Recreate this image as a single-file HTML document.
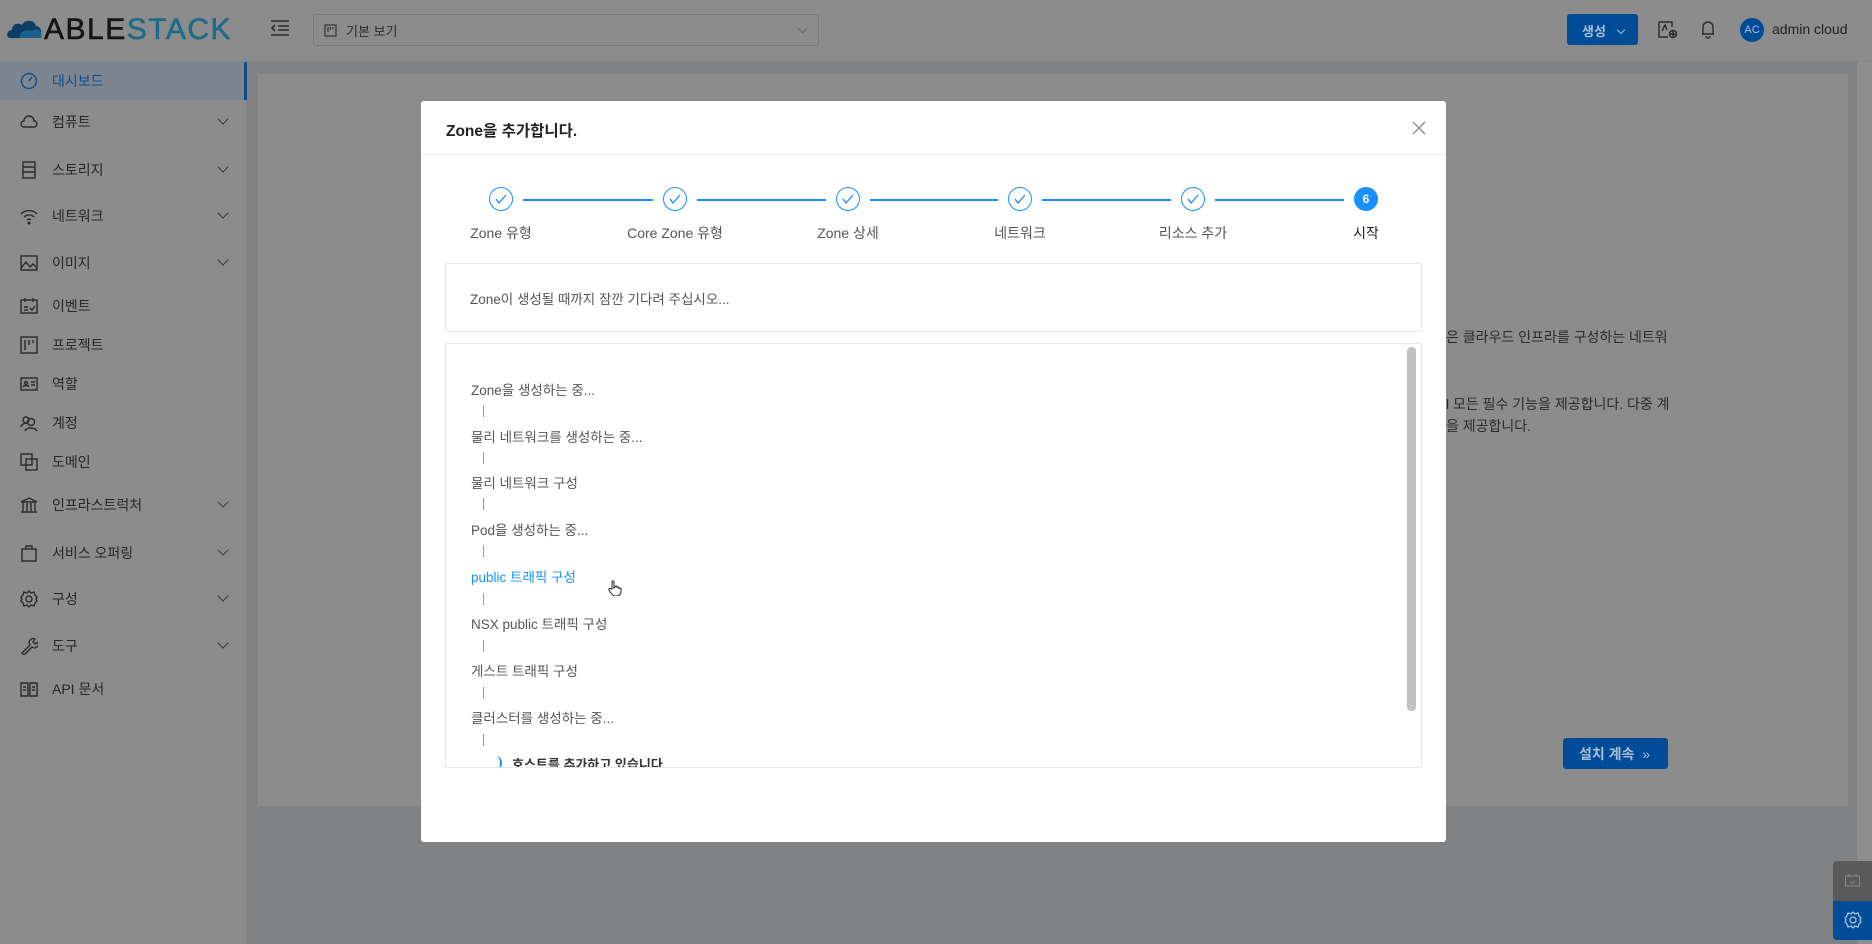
<!DOCTYPE html>
<html><head><meta charset="utf-8">
<style>
*{box-sizing:border-box;margin:0;padding:0}
body{width:1872px;height:944px;overflow:hidden;background:#7f8182;font-family:"Liberation Sans","Noto Sans CJK KR",sans-serif;font-size:14px;color:#2a2a2a;position:relative}
.hdr{position:absolute;left:0;top:0;width:1872px;height:62px;background:#8c8c8c;border-bottom:1px solid #858585}
.side{position:absolute;left:0;top:62px;width:247px;height:882px;background:#8c8c8c;border-right:1px solid #848484}
.mi{position:absolute;left:0;width:247px;height:40px;display:flex;align-items:center;padding-left:20px;font-size:14px;color:#262626}
.mi svg{width:18px;height:18px;margin-right:14px;stroke:#2a2a2a;fill:none;stroke-width:1.4}
.mi .ch{position:absolute;right:20px;top:13px;width:8px;height:8px;border-right:1.6px solid #333;border-bottom:1.6px solid #333;transform:rotate(45deg)}
.act{background:#7d8690;border-right:3px solid #0d4c8f;color:#0d4c8f}
.act svg{stroke:#0d4c8f}
.card{position:absolute;left:258px;top:74px;width:1590px;height:732px;background:#8c8c8c}
.rtrack{position:absolute;left:1857px;top:62px;width:15px;height:882px;background:#8e8e8e}
.modal{position:absolute;left:421px;top:101px;width:1025px;height:741px;background:#fff;border-radius:3px}
.mt{position:absolute;left:25px;top:18px;font-size:15.5px;font-weight:bold;color:#222}
.mline{position:absolute;left:0;top:53px;width:100%;height:1px;background:#eee}
.x{position:absolute;right:20px;top:20px;width:14px;height:14px}
.step{position:absolute;top:86px;width:24px;height:24px;border:1.3px solid #1890ff;border-radius:50%}
.step svg{position:absolute;left:5px;top:6px}
.sl{position:absolute;top:98px;height:1.5px;background:#1890ff}
.lab{position:absolute;top:122px;font-size:14px;color:#555;transform:translateX(-50%);white-space:nowrap}
.box{position:absolute;border:1px solid #e8e8e8;border-radius:2px}
.li{position:absolute;left:25px;font-size:13.5px;color:#555;white-space:nowrap}
.bar{position:absolute;left:37px;width:1px;height:12px;background:#999}
</style></head><body>
<div class="hdr">
  <svg style="position:absolute;left:6px;top:16px" width="40" height="24" viewBox="0 0 40 24"><path d="M4 22 C0 22 0 14 6 14 C6 8 12 6 16 9 C19 3 28 3 30 10 C36 10 38 22 30 22 Z" fill="#0e3d66"/><path d="M14 22 C13 16 20 12 26 15 C30 11 38 15 35 22Z" fill="#1c5f8f"/></svg>
  <div style="position:absolute;left:44px;top:13px;font-size:30px;letter-spacing:1.5px;font-family:'Liberation Sans',sans-serif;-webkit-text-stroke:0.6px"><span style="color:#151515">ABLE</span><span style="color:#1d6a8a">STACK</span></div>
  <svg style="position:absolute;left:270px;top:19px" width="20" height="18" viewBox="0 0 20 18" stroke="#2a2a2a" stroke-width="1.6" fill="none"><path d="M1 2h18M8 7h11M8 11h11M1 16h18M5 6l-3 3 3 3"/></svg>
  <div style="position:absolute;left:313px;top:14px;width:506px;height:32px;border:1px solid #7a7a7a;border-radius:3px;background:#8c8c8c">
    <svg style="position:absolute;left:10px;top:9px" width="13" height="13" viewBox="0 0 13 13" stroke="#333" fill="none" stroke-width="1.2"><rect x="1" y="1" width="11" height="11"/><path d="M4 3v5M6.5 3v3M9 3v2"/></svg>
    <span style="position:absolute;left:32px;top:6px;font-size:13px;color:#2a2a2a">기본 보기</span>
    <span style="position:absolute;right:12px;top:10px;width:7px;height:7px;border-right:1px solid #666;border-bottom:1px solid #666;transform:rotate(45deg)"></span>
  </div>
  <div style="position:absolute;left:1567px;top:14px;width:71px;height:31px;background:#004c98;border-radius:3px;color:#a9bdd6;font-size:13px;font-weight:bold;padding:7px 0 0 15px">생성 <span style="display:inline-block;width:6px;height:6px;border-right:1.2px solid #a9bdd6;border-bottom:1.2px solid #a9bdd6;transform:rotate(45deg);margin:0 0 3px 8px"></span></div>
  <svg style="position:absolute;left:1658px;top:21px" width="19" height="18" viewBox="0 0 19 18" stroke="#2a2a2a" fill="none" stroke-width="1.4"><path d="M14 6V1H1v15h9"/><path d="M4 10l3-6 2 5"/><circle cx="15" cy="13" r="3.5"/><path d="M15 9v8M11 13h8"/></svg>
  <svg style="position:absolute;left:1700px;top:19px" width="16" height="20" viewBox="0 0 16 20" stroke="#2a2a2a" fill="none" stroke-width="1.4"><path d="M3 15V8a5 5 0 0110 0v7H2h12M6 17a2 2 0 004 0"/></svg>
  <div style="position:absolute;left:1740px;top:18px;width:24px;height:24px;border-radius:50%;background:#004c98;color:#a9bdd6;font-size:11px;text-align:center;line-height:24px">AC</div>
  <span style="position:absolute;left:1772px;top:21px;font-size:14px;color:#222">admin cloud</span>
</div>
<div class="side">
  <div class="mi act" style="top:0;height:38px"><svg viewBox="0 0 18 18"><circle cx="9" cy="9" r="7.5"/><path d="M9 9l3-4"/></svg>대시보드</div>
  <div class="mi" style="top:40px"><svg viewBox="0 0 18 18"><path d="M4 14a3 3 0 010-6 5 5 0 0110 0 3 3 0 010 6z"/></svg>컴퓨트<span class="ch"></span></div>
  <div class="mi" style="top:88px"><svg viewBox="0 0 18 18"><rect x="3" y="1" width="12" height="16"/><path d="M3 6h12M3 11h12"/></svg>스토리지<span class="ch"></span></div>
  <div class="mi" style="top:134px"><svg viewBox="0 0 18 18"><path d="M1 7a11 11 0 0116 0M4 10a7 7 0 0110 0M7 13a3 3 0 014 0"/><circle cx="9" cy="16" r=".8"/></svg>네트워크<span class="ch"></span></div>
  <div class="mi" style="top:181px"><svg viewBox="0 0 18 18"><rect x="1" y="2" width="16" height="14"/><path d="M1 14l5-6 4 5 3-3 4 4"/></svg>이미지<span class="ch"></span></div>
  <div class="mi" style="top:224px"><svg viewBox="0 0 18 18"><rect x="1" y="3" width="16" height="13"/><path d="M5 1v4M13 1v4M4 10h4M4 13h4M10 11l2 2 3-4"/></svg>이벤트</div>
  <div class="mi" style="top:263px"><svg viewBox="0 0 18 18"><rect x="1" y="1" width="16" height="16"/><path d="M5 4v10M9 4v5M13 4v3"/></svg>프로젝트</div>
  <div class="mi" style="top:302px"><svg viewBox="0 0 18 18"><rect x="1" y="3" width="16" height="12"/><circle cx="6" cy="8" r="1.5"/><path d="M3 12c1-2 5-2 6 0M11 7h4M11 10h4"/></svg>역할</div>
  <div class="mi" style="top:341px"><svg viewBox="0 0 18 18"><circle cx="6" cy="6" r="3"/><circle cx="11" cy="8" r="3.5"/><path d="M1 13c1-4 6-4 6-4M5 17c1-4 10-4 12 0"/></svg>계정</div>
  <div class="mi" style="top:380px"><svg viewBox="0 0 18 18"><rect x="1" y="1" width="11" height="11"/><rect x="6" y="6" width="11" height="11"/></svg>도메인</div>
  <div class="mi" style="top:423px"><svg viewBox="0 0 18 18"><path d="M1 6l8-4 8 4zM3 7v8M7 7v8M11 7v8M15 7v8M1 16h16"/></svg>인프라스트럭처<span class="ch"></span></div>
  <div class="mi" style="top:471px"><svg viewBox="0 0 18 18"><rect x="2" y="5" width="14" height="12"/><path d="M6 5V2h6v3"/></svg>서비스 오퍼링<span class="ch"></span></div>
  <div class="mi" style="top:517px"><svg viewBox="0 0 18 18"><circle cx="9" cy="9" r="3"/><path d="M9 1l2 2 3-1 1 3 2 2-1 2 1 2-2 2-1 3-3-1-2 2-2-2-3 1-1-3-2-2 1-2-1-2 2-2 1-3 3 1z"/></svg>구성<span class="ch"></span></div>
  <div class="mi" style="top:564px"><svg viewBox="0 0 18 18"><path d="M2 16l8-8a4 4 0 015-6l-2 3 2 2 3-2a4 4 0 01-6 5l-8 8z"/></svg>도구<span class="ch"></span></div>
  <div class="mi" style="top:607px"><svg viewBox="0 0 18 18"><path d="M1 3h7v13H1zM10 3h7v13h-7zM3 7h3M3 10h3M12 7h3M12 10h3"/></svg>API 문서</div>
</div>
<div class="card">
  <div style="position:absolute;left:1188px;top:253px;font-size:14px;color:#2a2a2a;white-space:nowrap">은 클라우드 인프라를 구성하는 네트워</div>
  <div style="position:absolute;left:1188px;top:320px;font-size:14px;color:#2a2a2a;white-space:nowrap">l 모든 필수 기능을 제공합니다. 다중 계</div>
  <div style="position:absolute;left:1188px;top:342px;font-size:14px;color:#2a2a2a;white-space:nowrap">을 제공합니다.</div>
  <div style="position:absolute;left:1305px;top:664px;width:105px;height:31px;background:#004c98;border-radius:3px;color:#a9bdd6;font-size:14px;font-weight:bold;padding:6px 0 0 16px">설치 계속 <span style="font-weight:normal;margin-left:4px">»</span></div>
</div>
<div class="rtrack"></div>
<div style="position:absolute;left:1833px;top:861px;width:39px;height:40px;background:#5a5a5a;border-radius:4px 0 0 0"><svg style="position:absolute;left:12px;top:13px" width="15" height="13" viewBox="0 0 15 13" stroke="#888" fill="none"><rect x=".5" y="2" width="14" height="10"/><path d="M4 0v3M11 0v3M5 8l2 2 3-3"/></svg></div>
<div style="position:absolute;left:1833px;top:901px;width:39px;height:39px;background:#004c98;border-radius:0 0 0 4px"><svg style="position:absolute;left:11px;top:10px" width="18" height="18" viewBox="0 0 18 18" stroke="#a9bdd6" fill="none" stroke-width="1.3"><circle cx="9" cy="9" r="3"/><path d="M9 1l2 2 3-1 1 3 2 2-1 2 1 2-2 2-1 3-3-1-2 2-2-2-3 1-1-3-2-2 1-2-1-2 2-2 1-3 3 1z"/></svg></div>

<div class="modal">
  <div class="mt">Zone을 추가합니다.</div>
  <svg class="x" viewBox="0 0 14 14" stroke="#888" stroke-width="1.3"><path d="M1 1l12 12M13 1L1 13"/></svg>
  <div class="mline"></div>
  <div class="step" style="left:68px"><svg width="12" height="10" viewBox="0 0 12 10" stroke="#1890ff" fill="none" stroke-width="1.3"><path d="M1 5l3 4 7-8"/></svg></div>
  <div class="step" style="left:242px"><svg width="12" height="10" viewBox="0 0 12 10" stroke="#1890ff" fill="none" stroke-width="1.3"><path d="M1 5l3 4 7-8"/></svg></div>
  <div class="step" style="left:415px"><svg width="12" height="10" viewBox="0 0 12 10" stroke="#1890ff" fill="none" stroke-width="1.3"><path d="M1 5l3 4 7-8"/></svg></div>
  <div class="step" style="left:587px"><svg width="12" height="10" viewBox="0 0 12 10" stroke="#1890ff" fill="none" stroke-width="1.3"><path d="M1 5l3 4 7-8"/></svg></div>
  <div class="step" style="left:760px"><svg width="12" height="10" viewBox="0 0 12 10" stroke="#1890ff" fill="none" stroke-width="1.3"><path d="M1 5l3 4 7-8"/></svg></div>
  <div class="step" style="left:933px;background:#1890ff;color:#fff;font-size:12px;font-weight:bold;text-align:center;line-height:22px">6</div>
  <div class="sl" style="left:102px;width:130px"></div>
  <div class="sl" style="left:276px;width:129px"></div>
  <div class="sl" style="left:449px;width:128px"></div>
  <div class="sl" style="left:621px;width:129px"></div>
  <div class="sl" style="left:794px;width:129px"></div>
  <div class="lab" style="left:80px">Zone 유형</div>
  <div class="lab" style="left:254px">Core Zone 유형</div>
  <div class="lab" style="left:427px">Zone 상세</div>
  <div class="lab" style="left:599px">네트워크</div>
  <div class="lab" style="left:772px">리소스 추가</div>
  <div class="lab" style="left:945px;color:#222">시작</div>

  <div class="box" style="left:24px;top:162px;width:977px;height:69px"><span style="position:absolute;left:24px;top:24px;font-size:13.5px;color:#555">Zone이 생성될 때까지 잠깐 기다려 주십시오...</span></div>
  <div class="box" style="left:24px;top:242px;width:977px;height:425px;overflow:hidden">
    <div style="position:absolute;right:5px;top:3px;width:9px;height:364px;background:#c1c1c1;border-radius:4px"></div>
    <div class="li" style="top:35px">Zone을 생성하는 중...</div><div class="bar" style="top:61px"></div>
    <div class="li" style="top:82px">물리 네트워크를 생성하는 중...</div><div class="bar" style="top:108px"></div>
    <div class="li" style="top:128px">물리 네트워크 구성</div><div class="bar" style="top:154px"></div>
    <div class="li" style="top:175px">Pod을 생성하는 중...</div><div class="bar" style="top:201px"></div>
    <div class="li" style="top:222px;color:#1890ff">public 트래픽 구성</div><div class="bar" style="top:249px"></div>
    <div class="li" style="top:269px">NSX public 트래픽 구성</div><div class="bar" style="top:296px"></div>
    <div class="li" style="top:316px">게스트 트래픽 구성</div><div class="bar" style="top:343px"></div>
    <div class="li" style="top:363px">클러스터를 생성하는 중...</div><div class="bar" style="top:390px"></div>
    <div style="position:absolute;left:44px;top:412px;width:12px;height:14px;border-right:2px solid #1890ff;border-radius:50%"></div>
    <div class="li" style="left:66px;top:410px;font-weight:bold;color:#333;font-size:13px">호스트를 추가하고 있습니다</div>
    <svg style="position:absolute;left:162px;top:236px" width="14" height="16" viewBox="0 0 14 16" stroke="#222" fill="#fff" stroke-width="1"><path d="M4 9V2a1 1 0 012 0v6l1-1a1 1 0 012 0v1a1 1 0 012 0v1a1 1 0 012 0v3c0 2-2 4-4 4H7c-2 0-3-2-5-4l-1-2a1 1 0 012-1z"/></svg>
  </div>
</div>
</body></html>
